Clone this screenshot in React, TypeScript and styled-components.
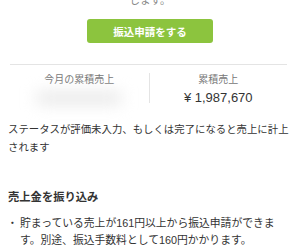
import React from 'react';
import styled, { createGlobalStyle } from 'styled-components';

const GlobalStyle = createGlobalStyle`
  html, body {
    margin: 0;
    padding: 0;
    background: #fff;
  }
  body {
    font-family: "Liberation Sans", "Noto Sans CJK JP", sans-serif;
    color: #333;
  }
`;

const Page = styled.div`
  width: 300px;
  height: 248px;
  overflow: hidden;
  box-sizing: border-box;
  padding: 0 8px;
  display: flex;
  flex-direction: column;
`;

const TopNote = styled.p`
  margin: -7px 0 0;
  text-align: center;
  font-size: 10.5px;
  line-height: 14px;
  color: #888;
`;

const TransferButton = styled.button`
  align-self: center;
  margin-top: 12px;
  width: 126px;
  height: 25px;
  border: none;
  border-radius: 3px;
  background: #8cc43e;
  color: #fff;
  font-family: inherit;
  font-size: 10.5px;
  font-weight: bold;
  padding: 0;
`;

const Stats = styled.div`
  margin: 21px 5px 0 2px;
  border-top: 1px solid #e4e4e4;
  display: grid;
  grid-template-columns: 1fr 1fr;
  padding-top: 8px;
`;

const StatCol = styled.div<{ $divider?: boolean }>`
  display: flex;
  flex-direction: column;
  align-items: center;
  height: 30px;
  border-left: ${({ $divider }) => ($divider ? '1px solid #e4e4e4' : 'none')};
`;

const StatLabel = styled.div`
  font-size: 10px;
  line-height: 14px;
  color: #777;
`;

const StatValue = styled.div`
  margin-top: 3px;
  font-size: 13px;
  line-height: 16px;
  color: #333;
`;

const Blurred = styled.div`
  margin-top: 6px;
  width: 84px;
  height: 20px;
  background: #e2e2e2;
  filter: blur(8px);
`;

const Note = styled.p`
  margin: 18px 0 0;
  font-size: 10.4px;
  line-height: 18px;
`;

const Heading = styled.h3`
  margin: 32px 0 0;
  font-size: 11.3px;
  line-height: 16px;
  font-weight: bold;
`;

const BulletList = styled.ul`
  list-style: none;
  margin: 10px 0 0;
  padding: 0;
  font-size: 10.8px;
  line-height: 16.5px;
`;

const Bullet = styled.li`
  display: flex;
`;

const Mark = styled.span`
  flex: 0 0 13px;
  margin-left: -1px;
`;

const BulletText = styled.span`
  width: 262px;
`;

export default function App() {
  return (
    <>
      <GlobalStyle />
      <Page>
        <TopNote>します。</TopNote>
        <TransferButton>振込申請をする</TransferButton>
        <Stats>
          <StatCol>
            <StatLabel>今月の累積売上</StatLabel>
            <Blurred />
          </StatCol>
          <StatCol $divider>
            <StatLabel>累積売上</StatLabel>
            <StatValue>¥ 1,987,670</StatValue>
          </StatCol>
        </Stats>
        <Note>ステータスが評価未入力、もしくは完了になると売上に計上されます</Note>
        <Heading>売上金を振り込み</Heading>
        <BulletList>
          <Bullet>
            <Mark>・</Mark>
            <BulletText>貯まっている売上が161円以上から振込申請ができます。別途、振込手数料として160円かかります。</BulletText>
          </Bullet>
        </BulletList>
      </Page>
    </>
  );
}
